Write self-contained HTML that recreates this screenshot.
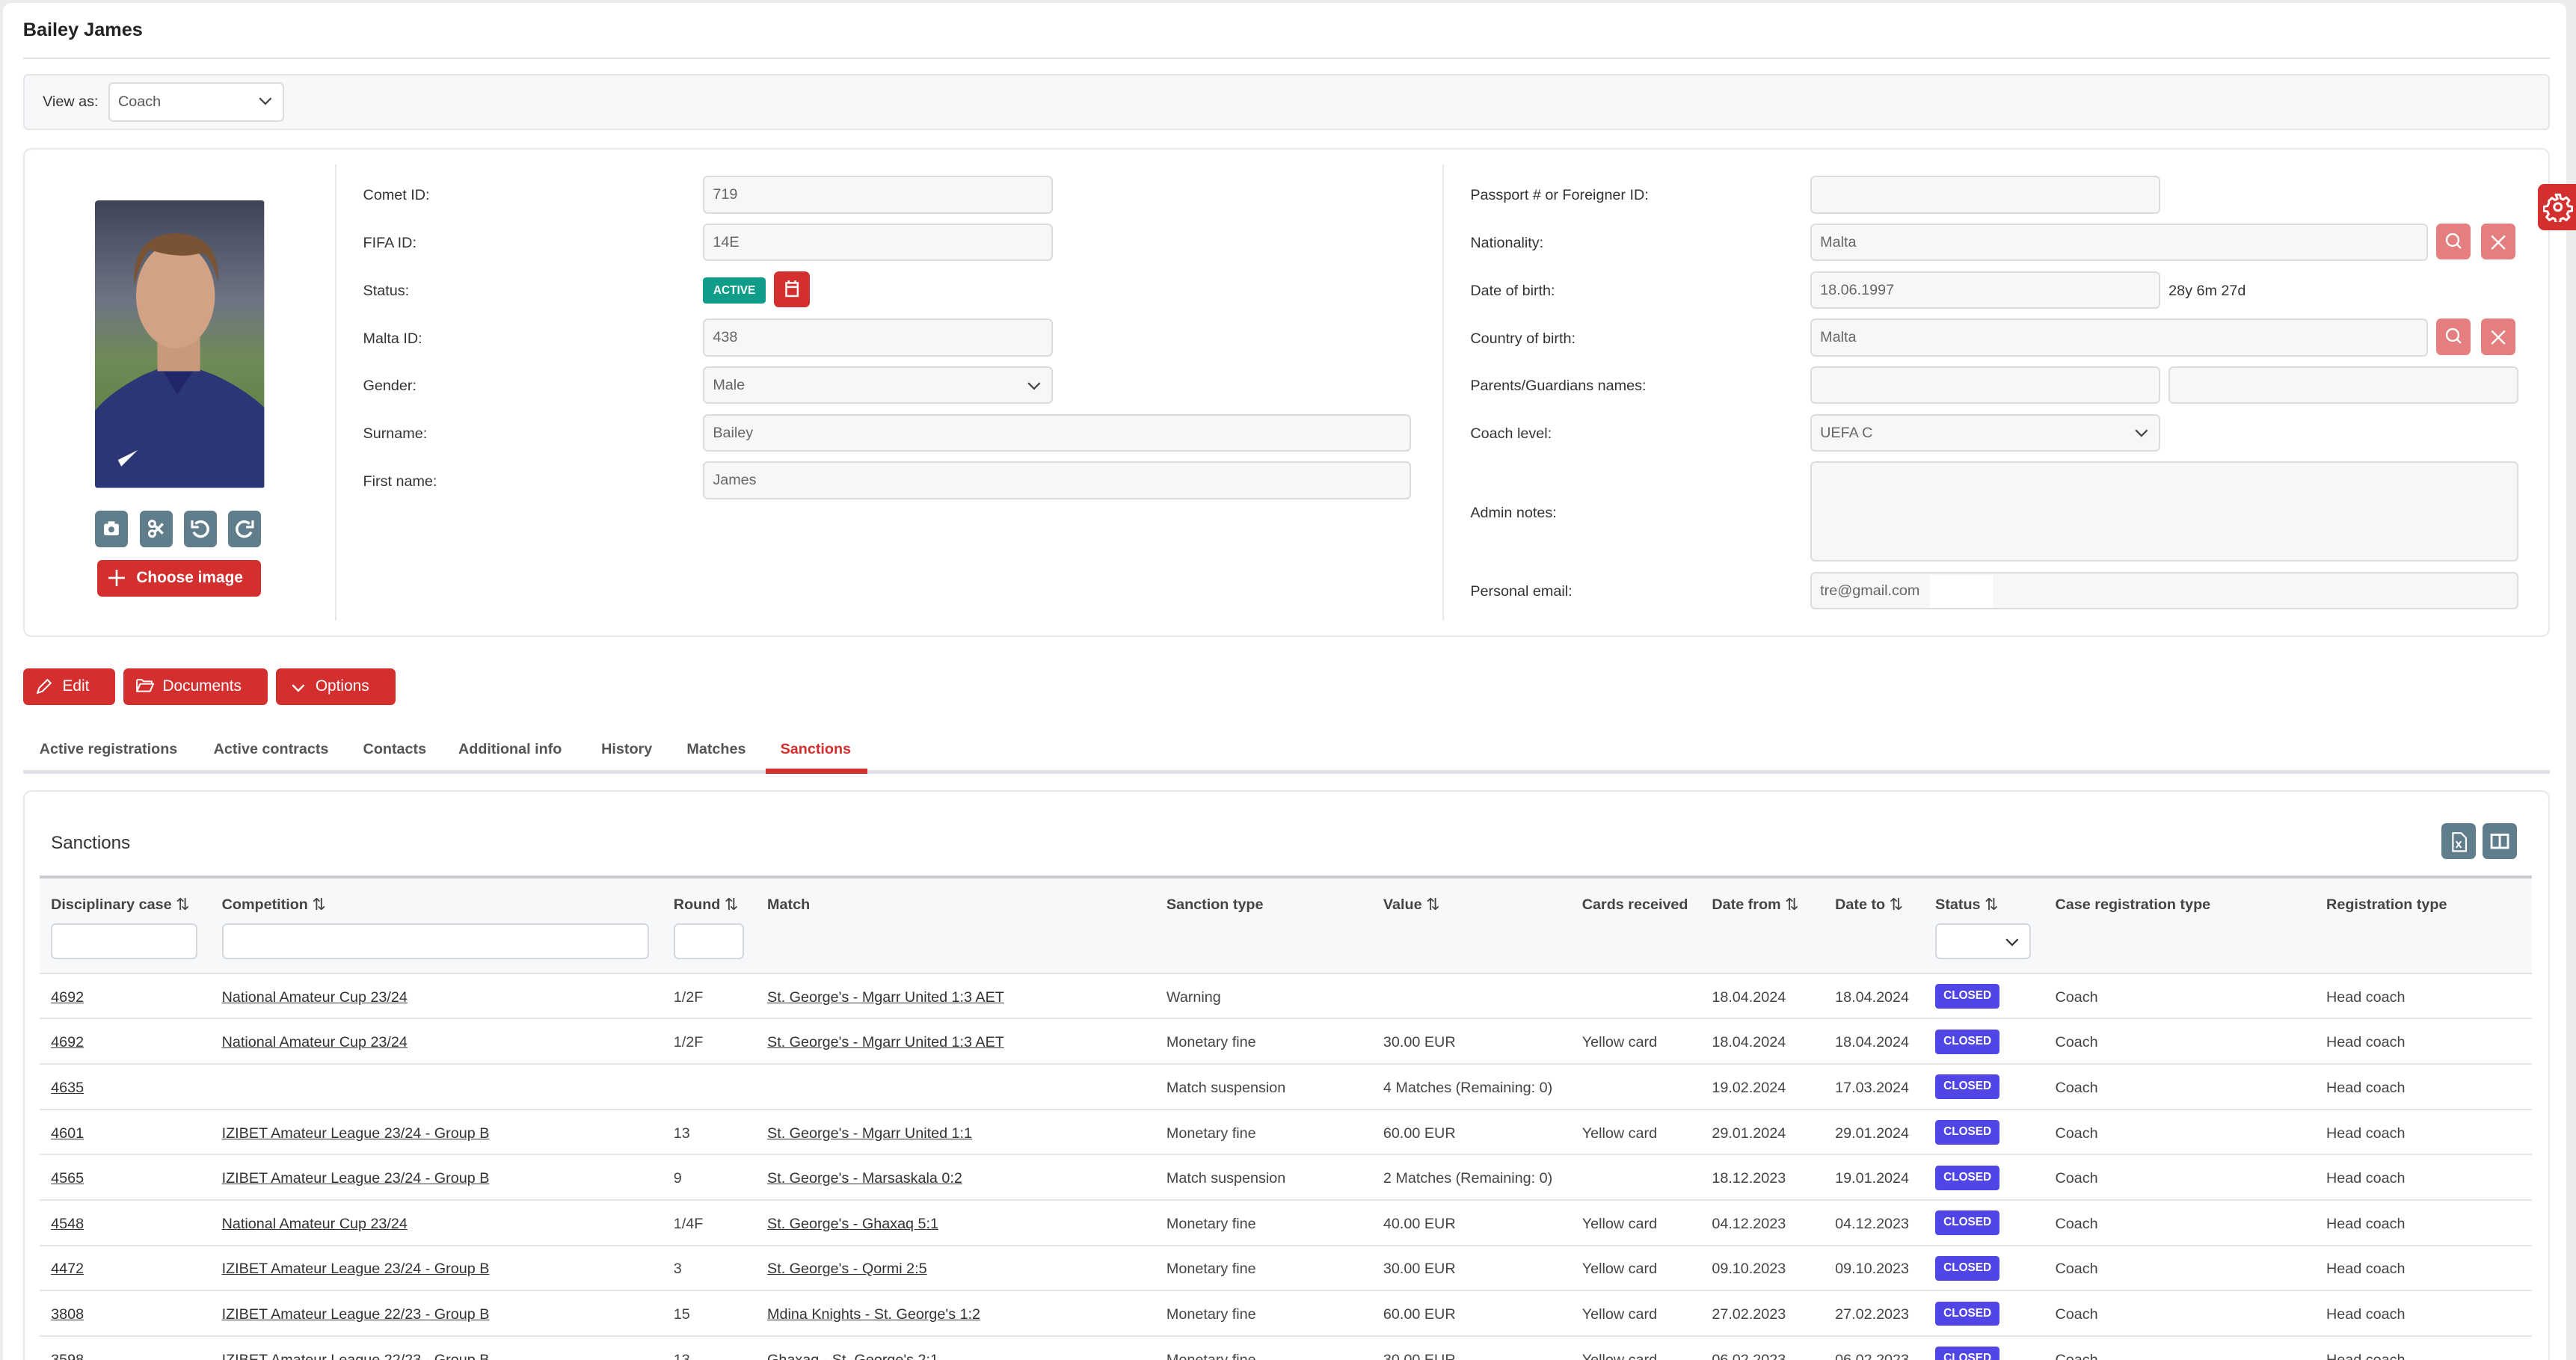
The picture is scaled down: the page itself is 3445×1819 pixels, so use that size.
<!DOCTYPE html>
<html><head><meta charset="utf-8"><style>
*{box-sizing:border-box;margin:0;padding:0}
html,body{width:3445px;height:1819px;overflow:hidden;background:#ececec}
#w{zoom:2.19707;width:1568px;height:828px;position:relative;font-family:"Liberation Sans",sans-serif;font-size:9px;color:#333}
.a{position:absolute}
.card{position:absolute;left:2px;top:2px;width:1560px;height:840px;background:#fff;border-radius:5px}
.inp{position:absolute;height:23px;background:#f7f7f7;border:1px solid #dcdcdc;border-radius:3px;color:#666;padding-left:5px;line-height:21px;font-size:9px}
.lbl{position:absolute;font-size:9px;color:#333}
.btn{position:absolute;background:#d32f2f;color:#fff;border-radius:3px;font-size:9.5px;line-height:22px;height:22px}
.gb{position:absolute;width:20px;height:22px;background:#607d8b;border-radius:3px}
.pb{position:absolute;width:21px;height:22px;background:#e57f7f;border-radius:3px}
.tab{position:absolute;top:451px;font-size:9px;font-weight:bold;color:#555}
.th{position:absolute;top:545px;font-weight:bold;font-size:9px;color:#444;line-height:12px;white-space:nowrap}
.th span{font-weight:normal;font-size:10px;line-height:12px;display:inline-block;vertical-align:top}
.fi{position:absolute;top:562px;height:22px;background:#fff;border:1px solid #d5d8dc;border-radius:3px}
.row{position:absolute;left:24px;width:1517px;height:27.6px;border-bottom:1px solid #e6e6e6}
.row span{position:absolute;top:9px;white-space:nowrap;color:#444}
.row u{color:#333}
.row .bd{background:#4f46e5;color:#fff;font-weight:bold;font-size:7px;border-radius:2px;padding:0 5px;top:6px;height:15px;line-height:15px}
svg{display:block}
</style></head><body><div id="w">
<div class="card"></div>
<div class="a" style="left:14px;top:12px;font-size:11.5px;font-weight:bold;color:#222">Bailey James</div>
<div class="a" style="left:14px;top:35px;width:1538px;height:1px;background:#e0e0e0"></div>
<div class="a" style="left:14px;top:45px;width:1538px;height:34px;background:#f7f8fa;border:1px solid #e3e5e8;border-radius:3px"></div>
<div class="lbl" style="left:26px;top:57px">View as:</div>
<div class="a" style="left:66px;top:50px;width:107px;height:24px;background:#fff;border:1px solid #dcdcdc;border-radius:3px;padding-left:5px;line-height:22px;color:#555">Coach<svg class="a" style="right:6px;top:8px" width="9" height="6"><path d="M1 1l3.5 3.5L8 1" stroke="#444" fill="none"/></svg></div>

<div class="a" style="left:14px;top:90px;width:1538px;height:298px;border:1px solid #e6e8eb;border-radius:5px"></div>
<svg class="a" style="left:58px;top:122px;border-radius:2px" width="103" height="175" viewBox="0 0 103 175">
<defs><linearGradient id="bg" x1="0" y1="0" x2="0" y2="1"><stop offset="0" stop-color="#3d4456"/><stop offset=".35" stop-color="#6d7484"/><stop offset=".55" stop-color="#6f8a56"/><stop offset="1" stop-color="#4e7a38"/></linearGradient></defs>
<rect width="103" height="175" fill="url(#bg)"/>
<path d="M0 175V128q10-12 30-22l20-8 22 8q18 8 31 20v49z" fill="#2c3576"/>
<path d="M38 98l12 20 14-20z" fill="#1f2766"/>
<rect x="38" y="80" width="26" height="24" fill="#c79a7c"/>
<ellipse cx="49" cy="58" rx="24" ry="32" fill="#d2a284"/>
<path d="M24 52q-2-30 24-32q28 0 27 30q-4-16-10-18q-14 4-32-2q-6 8-9 22z" fill="#7a5234"/>
<path d="M14 158l12-6-10 10z" fill="#fff"/>
</svg>
<div class="gb" style="left:58px;top:311px"><svg width="20" height="22"><rect x="5.5" y="8" width="9" height="7" rx="1" fill="#fff"/><rect x="8" y="6.5" width="4" height="2" fill="#fff"/><circle cx="10" cy="11.5" r="1.8" fill="#607d8b"/></svg></div>
<div class="gb" style="left:85px;top:311px"><svg width="20" height="22"><circle cx="7.5" cy="8" r="1.8" stroke="#fff" fill="none" stroke-width="1.4"/><circle cx="7.5" cy="14" r="1.8" stroke="#fff" fill="none" stroke-width="1.4"/><path d="M9 9l5 5M9 13l5-5" stroke="#fff" stroke-width="1.5"/></svg></div>
<div class="gb" style="left:112px;top:311px"><svg width="20" height="22"><path d="M7 8a4.5 4.5 0 1 1 -1 5" stroke="#fff" fill="none" stroke-width="1.6"/><path d="M5 6v4h4" stroke="#fff" fill="none" stroke-width="1.4"/></svg></div>
<div class="gb" style="left:139px;top:311px"><svg width="20" height="22"><path d="M13 8a4.5 4.5 0 1 0 1 5" stroke="#fff" fill="none" stroke-width="1.6"/><path d="M15 6v4h-4" stroke="#fff" fill="none" stroke-width="1.4"/></svg></div>
<div class="btn" style="left:59px;top:341px;width:100px;padding-left:24px;font-weight:bold">Choose image<svg class="a" style="left:7px;top:6px" width="10" height="10"><path d="M5 0v10M0 5h10" stroke="#fff" stroke-width="1.2"/></svg></div>

<div class="a" style="left:204px;top:100px;width:1px;height:278px;background:#e8e8e8"></div>
<div class="a" style="left:878px;top:100px;width:1px;height:278px;background:#e8e8e8"></div>

<div class="lbl" style="left:221px;top:114px">Comet ID:</div><div class="inp" style="left:428px;top:107px;width:213px">719</div>
<div class="lbl" style="left:221px;top:143px">FIFA ID:</div><div class="inp" style="left:428px;top:136px;width:213px">14E</div>
<div class="lbl" style="left:221px;top:172px">Status:</div>
<div class="a" style="left:428px;top:169px;width:38px;height:16px;background:#0f9d8a;border-radius:2px;color:#fff;font-weight:bold;font-size:7px;line-height:16px;text-align:center">ACTIVE</div>
<div class="a" style="left:471px;top:165px;width:22px;height:22px;background:#d32f2f;border-radius:3px"><svg width="22" height="22"><rect x="7.5" y="7" width="7" height="8" stroke="#fff" fill="none" stroke-width="1.1"/><path d="M7.5 9.5h7M9 5.5v2M13 5.5v2" stroke="#fff" stroke-width="1.1"/></svg></div>
<div class="lbl" style="left:221px;top:201px">Malta ID:</div><div class="inp" style="left:428px;top:194px;width:213px">438</div>
<div class="lbl" style="left:221px;top:230px">Gender:</div><div class="inp" style="left:428px;top:223px;width:213px">Male<svg class="a" style="right:6px;top:8px" width="9" height="6"><path d="M1 1l3.5 3.5L8 1" stroke="#444" fill="none"/></svg></div>
<div class="lbl" style="left:221px;top:259px">Surname:</div><div class="inp" style="left:428px;top:252px;width:431px">Bailey</div>
<div class="lbl" style="left:221px;top:288px">First name:</div><div class="inp" style="left:428px;top:281px;width:431px">James</div>

<div class="lbl" style="left:895px;top:114px">Passport # or Foreigner ID:</div><div class="inp" style="left:1102px;top:107px;width:213px"></div>
<div class="lbl" style="left:895px;top:143px">Nationality:</div><div class="inp" style="left:1102px;top:136px;width:376px">Malta</div>
<div class="pb" style="left:1483px;top:136px"><svg width="21" height="22"><circle cx="10" cy="10" r="3.6" stroke="#fff" fill="none" stroke-width="1.1"/><path d="M12.6 12.6l2.4 2.4" stroke="#fff" stroke-width="1.1"/></svg></div>
<div class="pb" style="left:1510px;top:136px"><svg width="21" height="22"><path d="M6.5 7.5l8 8M14.5 7.5l-8 8" stroke="#fff" stroke-width="1.1"/></svg></div>
<div class="lbl" style="left:895px;top:172px">Date of birth:</div><div class="inp" style="left:1102px;top:165px;width:213px">18.06.1997</div>
<div class="lbl" style="left:1320px;top:172px">28y 6m 27d</div>
<div class="lbl" style="left:895px;top:201px">Country of birth:</div><div class="inp" style="left:1102px;top:194px;width:376px">Malta</div>
<div class="pb" style="left:1483px;top:194px"><svg width="21" height="22"><circle cx="10" cy="10" r="3.6" stroke="#fff" fill="none" stroke-width="1.1"/><path d="M12.6 12.6l2.4 2.4" stroke="#fff" stroke-width="1.1"/></svg></div>
<div class="pb" style="left:1510px;top:194px"><svg width="21" height="22"><path d="M6.5 7.5l8 8M14.5 7.5l-8 8" stroke="#fff" stroke-width="1.1"/></svg></div>
<div class="lbl" style="left:895px;top:230px">Parents/Guardians names:</div><div class="inp" style="left:1102px;top:223px;width:213px"></div><div class="inp" style="left:1320px;top:223px;width:213px"></div>
<div class="lbl" style="left:895px;top:259px">Coach level:</div><div class="inp" style="left:1102px;top:252px;width:213px">UEFA C<svg class="a" style="right:6px;top:8px" width="9" height="6"><path d="M1 1l3.5 3.5L8 1" stroke="#444" fill="none"/></svg></div>
<div class="lbl" style="left:895px;top:307px">Admin notes:</div><div class="inp" style="left:1102px;top:281px;width:431px;height:61px"></div>
<div class="lbl" style="left:895px;top:355px">Personal email:</div><div class="inp" style="left:1102px;top:348px;width:431px">tre@gmail.com<span class="a" style="left:72px;top:1px;width:38px;height:20px;background:#fff"></span></div>

<div class="a" style="left:1545px;top:112px;width:25px;height:28px;background:#d32f2f;border-radius:4px 0 0 4px"><svg style="margin:5px 0 0 3px" width="18" height="18" viewBox="0 0 24 24"><path d="M10.3 2h3.4l.5 3 2 1 2.6-1.7 2.4 2.4-1.7 2.6 1 2 3 .5v3.4l-3 .5-1 2 1.7 2.6-2.4 2.4-2.6-1.7-2 1-.5 3h-3.4l-.5-3-2-1-2.6 1.7-2.4-2.4 1.7-2.6-1-2-3-.5v-3.4l3-.5 1-2L4.7 7.1l2.4-2.4 2.6 1.7 2-1z" stroke="#fff" fill="none" stroke-width="1.8" stroke-linejoin="round"/><circle cx="12" cy="12" r="3" stroke="#fff" fill="none" stroke-width="1.8"/></svg></div>

<div class="btn" style="left:14px;top:407px;width:56px;padding-left:24px">Edit<svg class="a" style="left:8px;top:6px" width="10" height="10"><path d="M1 9l1-3 5-5 2 2-5 5z" stroke="#fff" fill="none" stroke-width=".9"/></svg></div>
<div class="btn" style="left:75px;top:407px;width:88px;padding-left:24px">Documents<svg class="a" style="left:8px;top:6px" width="11" height="9"><path d="M.5 1h3l1 1h5v1.5M.5 1v7h8l2-4.5h-8L.5 8" stroke="#fff" fill="none" stroke-width=".9"/></svg></div>
<div class="btn" style="left:168px;top:407px;width:73px;padding-left:24px">Options<svg class="a" style="left:9px;top:9px" width="9" height="6"><path d="M1 1l3.5 3.5L8 1" stroke="#fff" fill="none" stroke-width="1.1"/></svg></div>

<div class="tab" style="left:24px">Active registrations</div>
<div class="tab" style="left:130px">Active contracts</div>
<div class="tab" style="left:221px">Contacts</div>
<div class="tab" style="left:279px">Additional info</div>
<div class="tab" style="left:366px">History</div>
<div class="tab" style="left:418px">Matches</div>
<div class="tab" style="left:475px;color:#d32f2f">Sanctions</div>
<div class="a" style="left:14px;top:469px;width:1538px;height:2px;background:#dfe2e6"></div>
<div class="a" style="left:466px;top:468px;width:62px;height:3px;background:#d32f2f"></div>

<div class="a" style="left:14px;top:481px;width:1538px;height:360px;border:1px solid #e6e8eb;border-radius:5px"></div>
<div class="a" style="left:31px;top:507px;font-size:11px;color:#333">Sanctions</div>
<div class="gb" style="left:1486px;top:501px;width:21px"><svg width="21" height="22"><path d="M7 6h5l3 3v8H7z" stroke="#fff" fill="none" stroke-width="1"/><path d="M9 11l3 4M12 11l-3 4" stroke="#fff" stroke-width=".9"/></svg></div>
<div class="gb" style="left:1511px;top:501px;width:21px"><svg width="21" height="22"><rect x="5.5" y="7" width="10" height="8" stroke="#fff" fill="none" stroke-width="1.3"/><path d="M10.5 7v8" stroke="#fff" stroke-width="1.3"/></svg></div>

<div class="a" style="left:24px;top:533px;width:1517px;height:60px;background:#f7f8fa;border-top:2px solid #c9cbcf;border-bottom:1px solid #e3e3e3"></div>
<div class="th" style="left:31px">Disciplinary case <span>⇅</span></div>
<div class="th" style="left:135px">Competition <span>⇅</span></div>
<div class="th" style="left:410px">Round <span>⇅</span></div>
<div class="th" style="left:467px">Match</div>
<div class="th" style="left:710px">Sanction type</div>
<div class="th" style="left:842px">Value <span>⇅</span></div>
<div class="th" style="left:963px">Cards received</div>
<div class="th" style="left:1042px">Date from <span>⇅</span></div>
<div class="th" style="left:1117px">Date to <span>⇅</span></div>
<div class="th" style="left:1178px">Status <span>⇅</span></div>
<div class="th" style="left:1251px">Case registration type</div>
<div class="th" style="left:1416px">Registration type</div>
<div class="fi" style="left:31px;width:89px"></div>
<div class="fi" style="left:135px;width:260px"></div>
<div class="fi" style="left:410px;width:43px"></div>
<div class="fi" style="left:1178px;width:58px"><svg class="a" style="right:6px;top:8px" width="9" height="6"><path d="M1 1l3.5 3.5L8 1" stroke="#333" fill="none"/></svg></div>

<div class="row" style="top:593px"><span style="left:7px"><u>4692</u></span><span style="left:111px"><u>National Amateur Cup 23/24</u></span><span style="left:386px">1/2F</span><span style="left:443px"><u>St. George's - Mgarr United 1:3 AET</u></span><span style="left:686px">Warning</span><span style="left:1018px">18.04.2024</span><span style="left:1093px">18.04.2024</span><span class="bd" style="left:1154px">CLOSED</span><span style="left:1227px">Coach</span><span style="left:1392px">Head coach</span></div>
<div class="row" style="top:620.6px"><span style="left:7px"><u>4692</u></span><span style="left:111px"><u>National Amateur Cup 23/24</u></span><span style="left:386px">1/2F</span><span style="left:443px"><u>St. George's - Mgarr United 1:3 AET</u></span><span style="left:686px">Monetary fine</span><span style="left:818px">30.00 EUR</span><span style="left:939px">Yellow card</span><span style="left:1018px">18.04.2024</span><span style="left:1093px">18.04.2024</span><span class="bd" style="left:1154px">CLOSED</span><span style="left:1227px">Coach</span><span style="left:1392px">Head coach</span></div>
<div class="row" style="top:648.2px"><span style="left:7px"><u>4635</u></span><span style="left:686px">Match suspension</span><span style="left:818px">4 Matches (Remaining: 0)</span><span style="left:1018px">19.02.2024</span><span style="left:1093px">17.03.2024</span><span class="bd" style="left:1154px">CLOSED</span><span style="left:1227px">Coach</span><span style="left:1392px">Head coach</span></div>
<div class="row" style="top:675.8px"><span style="left:7px"><u>4601</u></span><span style="left:111px"><u>IZIBET Amateur League 23/24 - Group B</u></span><span style="left:386px">13</span><span style="left:443px"><u>St. George's - Mgarr United 1:1</u></span><span style="left:686px">Monetary fine</span><span style="left:818px">60.00 EUR</span><span style="left:939px">Yellow card</span><span style="left:1018px">29.01.2024</span><span style="left:1093px">29.01.2024</span><span class="bd" style="left:1154px">CLOSED</span><span style="left:1227px">Coach</span><span style="left:1392px">Head coach</span></div>
<div class="row" style="top:703.4px"><span style="left:7px"><u>4565</u></span><span style="left:111px"><u>IZIBET Amateur League 23/24 - Group B</u></span><span style="left:386px">9</span><span style="left:443px"><u>St. George's - Marsaskala 0:2</u></span><span style="left:686px">Match suspension</span><span style="left:818px">2 Matches (Remaining: 0)</span><span style="left:1018px">18.12.2023</span><span style="left:1093px">19.01.2024</span><span class="bd" style="left:1154px">CLOSED</span><span style="left:1227px">Coach</span><span style="left:1392px">Head coach</span></div>
<div class="row" style="top:731px"><span style="left:7px"><u>4548</u></span><span style="left:111px"><u>National Amateur Cup 23/24</u></span><span style="left:386px">1/4F</span><span style="left:443px"><u>St. George's - Ghaxaq 5:1</u></span><span style="left:686px">Monetary fine</span><span style="left:818px">40.00 EUR</span><span style="left:939px">Yellow card</span><span style="left:1018px">04.12.2023</span><span style="left:1093px">04.12.2023</span><span class="bd" style="left:1154px">CLOSED</span><span style="left:1227px">Coach</span><span style="left:1392px">Head coach</span></div>
<div class="row" style="top:758.6px"><span style="left:7px"><u>4472</u></span><span style="left:111px"><u>IZIBET Amateur League 23/24 - Group B</u></span><span style="left:386px">3</span><span style="left:443px"><u>St. George's - Qormi 2:5</u></span><span style="left:686px">Monetary fine</span><span style="left:818px">30.00 EUR</span><span style="left:939px">Yellow card</span><span style="left:1018px">09.10.2023</span><span style="left:1093px">09.10.2023</span><span class="bd" style="left:1154px">CLOSED</span><span style="left:1227px">Coach</span><span style="left:1392px">Head coach</span></div>
<div class="row" style="top:786.2px"><span style="left:7px"><u>3808</u></span><span style="left:111px"><u>IZIBET Amateur League 22/23 - Group B</u></span><span style="left:386px">15</span><span style="left:443px"><u>Mdina Knights - St. George's 1:2</u></span><span style="left:686px">Monetary fine</span><span style="left:818px">60.00 EUR</span><span style="left:939px">Yellow card</span><span style="left:1018px">27.02.2023</span><span style="left:1093px">27.02.2023</span><span class="bd" style="left:1154px">CLOSED</span><span style="left:1227px">Coach</span><span style="left:1392px">Head coach</span></div>
<div class="row" style="top:813.8px"><span style="left:7px"><u>3598</u></span><span style="left:111px"><u>IZIBET Amateur League 22/23 - Group B</u></span><span style="left:386px">13</span><span style="left:443px"><u>Ghaxaq - St. George's 2:1</u></span><span style="left:686px">Monetary fine</span><span style="left:818px">30.00 EUR</span><span style="left:939px">Yellow card</span><span style="left:1018px">06.02.2023</span><span style="left:1093px">06.02.2023</span><span class="bd" style="left:1154px">CLOSED</span><span style="left:1227px">Coach</span><span style="left:1392px">Head coach</span></div>
</div></body></html>
